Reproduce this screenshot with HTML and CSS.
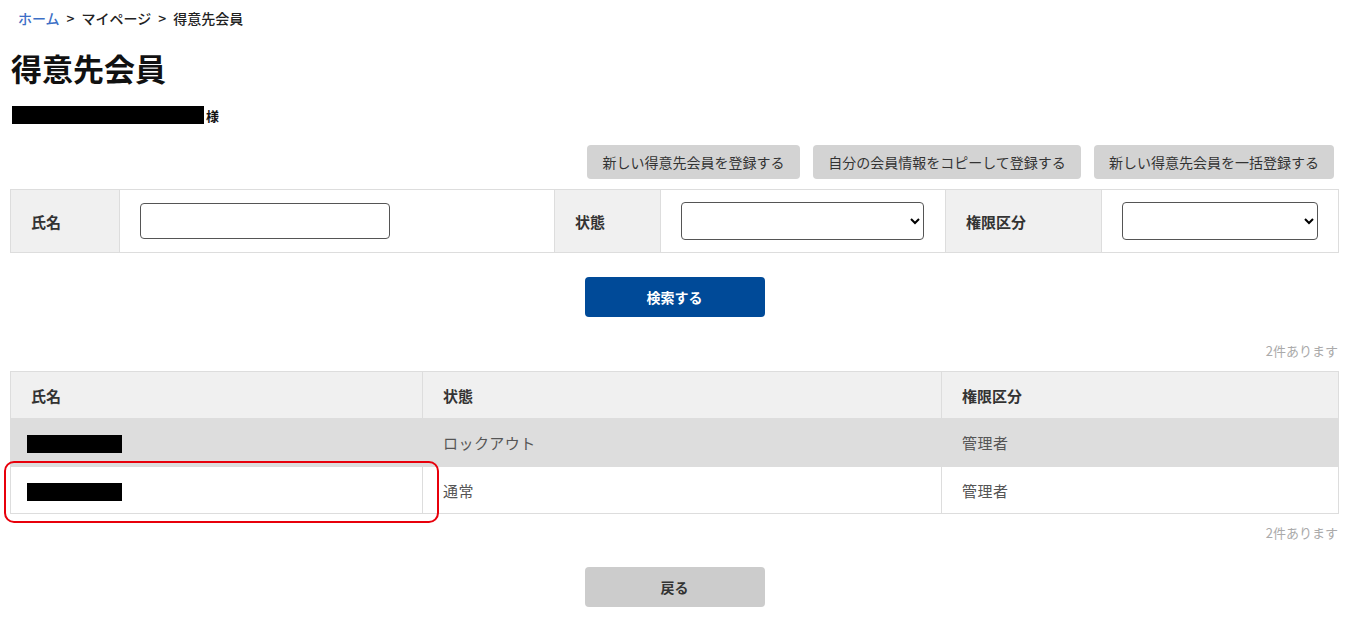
FILE: index.html
```html
<!DOCTYPE html>
<html lang="ja">
<head>
<meta charset="utf-8">
<title>得意先会員</title>
<link rel="stylesheet" href="styles.css">
</head>
<body>
<div class="page">
  <nav class="crumbs"><a class="crumb-link" href="#">ホーム</a><span class="sep">&gt;</span><span>マイページ</span><span class="sep">&gt;</span><span>得意先会員</span></nav>
  <h1 class="title">得意先会員</h1>
  <div class="user"><span class="mask mask-user"></span><span class="sama">様</span></div>
  <div class="actions">
    <button class="btn-gray">新しい得意先会員を登録する</button>
    <button class="btn-gray">自分の会員情報をコピーして登録する</button>
    <button class="btn-gray">新しい得意先会員を一括登録する</button>
  </div>
  <table class="search">
    <colgroup><col class="c1"><col class="c2"><col class="c3"><col class="c4"><col class="c5"><col class="c6"></colgroup>
    <tr>
      <th>氏名</th>
      <td><input class="field text-field" type="text"></td>
      <th>状態</th>
      <td><select class="field sel1"><option></option></select></td>
      <th>権限区分</th>
      <td><select class="field sel2"><option></option></select></td>
    </tr>
  </table>
  <div class="center"><button class="btn-primary">検索する</button></div>
  <div class="count count-top">2件あります</div>
  <div class="result-wrap">
    <table class="result">
      <colgroup><col class="r1"><col class="r2"><col class="r3"></colgroup>
      <tr class="head"><th>氏名</th><th>状態</th><th>権限区分</th></tr>
      <tr class="row-lock"><td><span class="mask mask-name"></span></td><td>ロックアウト</td><td>管理者</td></tr>
      <tr class="row-normal"><td><span class="mask mask-name"></span></td><td>通常</td><td>管理者</td></tr>
    </table>
    <div class="highlight"></div>
  </div>
  <div class="count count-bottom">2件あります</div>
  <div class="center back-row"><button class="btn-back">戻る</button></div>
</div>
</body>
</html>
```
FILE: styles.css
```css
* { box-sizing: border-box; }
body {
  margin: 0;
  background: #fff;
  font-family: "Noto Sans CJK JP", "Noto Sans", sans-serif;
  color: #333;
}
.page {
  padding: 0 12px 0 10px;
  width: 1350px;
}
.crumbs {
  padding: 8px 0 0 8px;
  font-size: 14px;
  line-height: 20px;
  font-weight: 500;
  color: #222;
  display: flex;
  align-items: center;
}
.crumb-link { color: #3d6fc6; text-decoration: none; }
.sep { margin: 0 7px; }
.title {
  margin: 20px 0 0 1px;
  font-size: 31px;
  line-height: 40px;
  font-weight: 700;
  color: #111;
}
.user {
  margin-top: 17px;
  display: flex;
  align-items: center;
  padding-left: 2px;
  height: 20px;
}
.mask { display: inline-block; background: #000; }
.mask-user { width: 192px; height: 18px; }
.sama { font-size: 13px; font-weight: 700; margin-left: 2px; color: #111; }
.actions {
  margin-top: 20px;
  display: flex;
  justify-content: flex-end;
  gap: 13px;
  padding-right: 4px;
}
.btn-gray {
  height: 34px;
  border: none;
  border-radius: 4px;
  background: #d3d3d3;
  color: #333;
  font-family: inherit;
  font-size: 14px;
  padding: 0;
  white-space: nowrap;
}
.actions .btn-gray:nth-child(1) { width: 213px; }
.actions .btn-gray:nth-child(2) { width: 268px; }
.actions .btn-gray:nth-child(3) { width: 240px; }
.search {
  margin-top: 10px;
  width: 1328px;
  border-collapse: collapse;
  table-layout: fixed;
}
.c1 { width: 109px; } .c2 { width: 435px; } .c3 { width: 106px; }
.c4 { width: 285px; } .c5 { width: 156px; } .c6 { width: 237px; }
.search th, .search td {
  border: 1px solid #ddd;
  height: 63px;
  padding: 0 20px;
}
.search th {
  background: #f0f0f0;
  text-align: left;
  font-size: 15px;
  font-weight: 700;
  color: #333;
}
.field {
  height: 36px;
  border: 1px solid #555;
  border-radius: 4px;
  background: #fff;
  font-family: inherit;
  display: block;
}
.text-field { width: 250px; }
.sel1 { width: 243px; height: 38px; }
.sel2 { width: 196px; height: 38px; }
.center { display: flex; justify-content: center; }
.center .btn-primary, .center .btn-back { margin-left: 1px; }
.btn-primary {
  margin-top: 24px;
  width: 180px;
  height: 40px;
  border: none;
  border-radius: 4px;
  background: #004a98;
  color: #fff;
  font-family: inherit;
  font-size: 14px;
  font-weight: 700;
}
.count {
  text-align: right;
  font-size: 13px;
  color: #aaa;
  line-height: 20px;
}
.count-top { margin-top: 24px; }
.result-wrap { position: relative; margin-top: 10px; }
.result {
  width: 1328px;
  border-collapse: collapse;
  table-layout: fixed;
}
.r1 { width: 412px; } .r2 { width: 519px; } .r3 { width: 397px; }
.result th, .result td {
  border: 1px solid #ddd;
  text-align: left;
  padding: 0 20px;
  font-size: 15px;
}
.result th {
  height: 47px;
  background: #f0f0f0;
  font-weight: 700;
  color: #333;
}
.result td { height: 48px; color: #555; letter-spacing: 0.03em; }
.result .row-normal td { height: 47px; }
.result td:first-child { padding-left: 16px; }
.row-lock td { background: #dddddd; }
.row-normal td { background: #fff; }
.mask-name { width: 95px; height: 18px; vertical-align: middle; }
.highlight {
  position: absolute;
  left: -6px;
  top: 90px;
  width: 435px;
  height: 62px;
  border: 2px solid #e8000b;
  border-radius: 10px;
  pointer-events: none;
}
.count-bottom { margin-top: 9px; }
.back-row { margin-top: 24px; }
.btn-back {
  width: 180px;
  height: 40px;
  border: none;
  border-radius: 4px;
  background: #cccccc;
  color: #333;
  font-family: inherit;
  font-size: 14px;
  font-weight: 700;
}
```
